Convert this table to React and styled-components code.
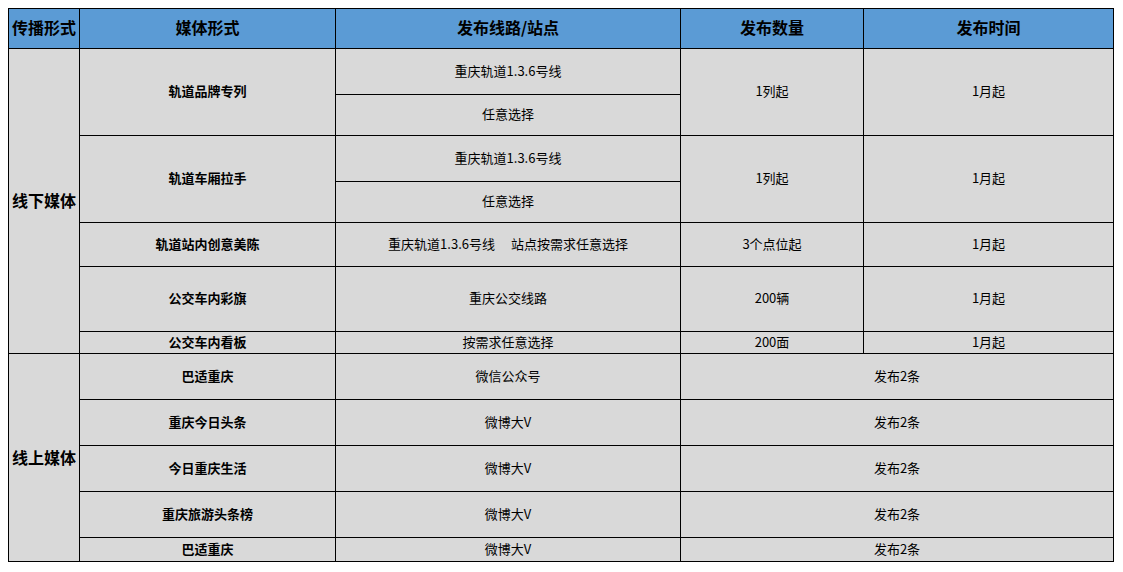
import styled, { createGlobalStyle } from "styled-components";

const offline = [
  { media: "轨道品牌专列", routes: ["重庆轨道1.3.6号线", "任意选择"], count: "1列起", time: "1月起", heights: [46, 41] },
  { media: "轨道车厢拉手", routes: ["重庆轨道1.3.6号线", "任意选择"], count: "1列起", time: "1月起", heights: [46, 41] },
  { media: "轨道站内创意美陈", routes: ["重庆轨道1.3.6号线\u3000 站点按需求任意选择"], count: "3个点位起", time: "1月起", heights: [44] },
  { media: "公交车内彩旗", routes: ["重庆公交线路"], count: "200辆", time: "1月起", heights: [65] },
  { media: "公交车内看板", routes: ["按需求任意选择"], count: "200面", time: "1月起", heights: [22] },
];

const online = [
  { media: "巴适重庆", channel: "微信公众号", height: 46 },
  { media: "重庆今日头条", channel: "微博大V", height: 46 },
  { media: "今日重庆生活", channel: "微博大V", height: 46 },
  { media: "重庆旅游头条榜", channel: "微博大V", height: 46 },
  { media: "巴适重庆", channel: "微博大V", height: 24 },
];

function App() {
  const offlineRows = offline.reduce((n, item) => n + item.routes.length, 0);
  return (
    <>
      <GlobalStyle />
      <Table>
        <colgroup>
          <col style={{ width: 71 }} />
          <col style={{ width: 256 }} />
          <col style={{ width: 345 }} />
          <col style={{ width: 183 }} />
          <col style={{ width: 250 }} />
        </colgroup>
        <thead>
          <Row $h={40}>
            <HeadCell>传播形式</HeadCell>
            <HeadCell>媒体形式</HeadCell>
            <HeadCell>发布线路/站点</HeadCell>
            <HeadCell>发布数量</HeadCell>
            <HeadCell>发布时间</HeadCell>
          </Row>
        </thead>
        <tbody>
          {offline.map((item, i) =>
            item.routes.map((route, j) => (
              <Row key={`off-${i}-${j}`} $h={item.heights[j]}>
                {i === 0 && j === 0 && (
                  <GroupCell rowSpan={offlineRows}>线下媒体</GroupCell>
                )}
                {j === 0 && (
                  <MediaCell rowSpan={item.routes.length}>{item.media}</MediaCell>
                )}
                <Cell>{route}</Cell>
                {j === 0 && <Cell rowSpan={item.routes.length}>{item.count}</Cell>}
                {j === 0 && <Cell rowSpan={item.routes.length}>{item.time}</Cell>}
              </Row>
            ))
          )}
          {online.map((item, i) => (
            <Row key={`on-${i}`} $h={item.height}>
              {i === 0 && <GroupCell rowSpan={online.length}>线上媒体</GroupCell>}
              <MediaCell>{item.media}</MediaCell>
              <Cell>{item.channel}</Cell>
              <Cell colSpan={2}>发布2条</Cell>
            </Row>
          ))}
        </tbody>
      </Table>
    </>
  );
}

const GlobalStyle = createGlobalStyle`
  body {
    margin: 8px;
    background: #ffffff;
    font-family: "Noto Sans CJK SC", "Noto Sans", sans-serif;
    color: #000000;
  }
`;

const Table = styled.table`
  border-collapse: collapse;
  table-layout: fixed;
  width: 1105px;
  background: #d9d9d9;
`;

const Row = styled.tr`
  height: ${(p) => p.$h}px;
`;

const Cell = styled.td`
  border: 1px solid #000000;
  padding: 0 0 2px;
  text-align: center;
  vertical-align: middle;
  font-size: 13px;
  line-height: 18px;
  white-space: pre;
`;

const HeadCell = styled.th`
  border: 1px solid #000000;
  padding: 0 0 4px;
  background: #5b9bd5;
  font-size: 16px;
  font-weight: 700;
  line-height: 20px;
  text-align: center;
`;

const MediaCell = styled(Cell)`
  font-weight: 700;
`;

const GroupCell = styled(Cell)`
  font-size: 16px;
  font-weight: 700;
  line-height: 20px;
`;

export default App;
